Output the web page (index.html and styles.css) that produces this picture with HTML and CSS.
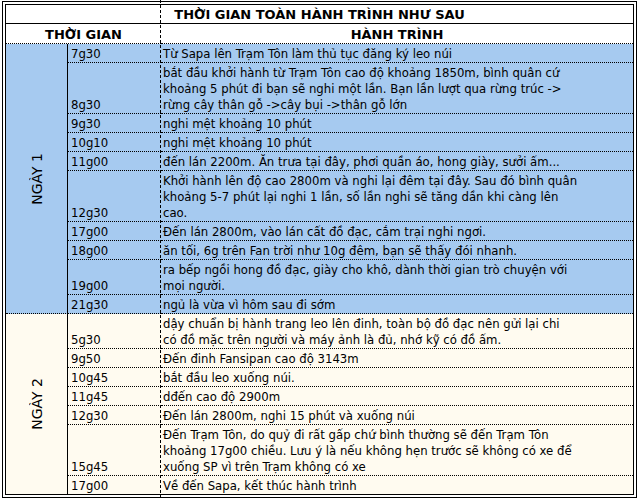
FILE: index.html
```html
<!DOCTYPE html>
<html lang="vi">
<head>
<meta charset="utf-8">
<title>Thời gian toàn hành trình</title>
<link rel="stylesheet" href="styles.css">
</head>
<body>
<div class="sheet">
  <div class="grid">
    <div class="title">THỜI GIAN TOÀN HÀNH TRÌNH NHƯ SAU</div>
    <div class="head head-time">THỜI GIAN</div>
    <div class="head head-route">HÀNH TRÌNH</div>

    <div class="day day1"><span>NGÀY 1</span></div>
    <div class="time d1">7g30</div><div class="desc d1">Từ Sapa lên Trạm Tôn làm thủ tục đăng ký leo núi</div>
    <div class="time d1">8g30</div><div class="desc d1">bắt đầu khởi hành từ Trạm Tôn cao độ khoảng 1850m, bình quân cứ<br>khoảng 5 phút đi bạn sẽ nghi một lần. Bạn lần lượt qua rừng trúc -&gt;<br>rừng cây thân gỗ -&gt;cây bụi -&gt;thân gỗ lớn</div>
    <div class="time d1">9g30</div><div class="desc d1">nghi mệt khoảng 10 phút</div>
    <div class="time d1">10g10</div><div class="desc d1">nghi mệt khoảng 10 phút</div>
    <div class="time d1">11g00</div><div class="desc d1">đến lán 2200m. Ăn trưa tại đây, phơi quần áo, hong giày, sưởi ấm...</div>
    <div class="time d1">12g30</div><div class="desc d1">Khởi hành lên độ cao 2800m và nghi lại đêm tại đây. Sau đó bình quân<br>khoảng 5-7 phút lại nghi 1 lần, số lần nghi sẽ tăng dần khi càng lên<br>cao.</div>
    <div class="time d1">17g00</div><div class="desc d1">Đến lán 2800m, vào lán cất đồ đạc, cắm trại nghi ngơi.</div>
    <div class="time d1">18g00</div><div class="desc d1">ăn tối, 6g trên Fan trời như 10g đêm, bạn sẽ thấy đói nhanh.</div>
    <div class="time d1">19g00</div><div class="desc d1">ra bếp ngồi hong đồ đạc, giày cho khô, dành thời gian trò chuyện với<br>mọi người.</div>
    <div class="time d1">21g30</div><div class="desc d1">ngủ là vừa vì hôm sau đi sớm</div>

    <div class="day day2"><span>NGÀY 2</span></div>
    <div class="time d2">5g30</div><div class="desc d2">dậy chuẩn bị hành trang leo lên đinh, toàn bộ đồ đạc nên gửi lại chi<br>có đồ mặc trên người và máy ảnh là đủ, nhớ kỹ có đồ ấm.</div>
    <div class="time d2">9g50</div><div class="desc d2">Đến đinh Fansipan cao độ 3143m</div>
    <div class="time d2">10g45</div><div class="desc d2">bắt đầu leo xuống núi.</div>
    <div class="time d2">11g45</div><div class="desc d2">dđến cao độ 2900m</div>
    <div class="time d2">12g30</div><div class="desc d2">Đến lán 2800m, nghi 15 phút và xuống núi</div>
    <div class="time d2">15g45</div><div class="desc d2">Đến Trạm Tôn, do quỷ đi rất gấp chứ bình thường sẽ đến Trạm Tôn<br>khoảng 17g00 chiều. Lưu ý là nếu không hẹn trước sẽ không có xe để<br>xuống SP vì trên Trạm không có xe</div>
    <div class="time d2 last">17g00</div><div class="desc d2 last">Về đến Sapa, kết thúc hành trình</div>
  </div>
  <div class="pagebreak"></div>
</div>
</body>
</html>
```

FILE: styles.css
```css
html, body {
  margin: 0;
  padding: 0;
  background: #ffffff;
}

body {
  font-family: "DejaVu Sans Condensed", "DejaVu Sans", sans-serif;
  font-stretch: condensed;
  font-size: 13px;
  color: #000000;
}

.sheet {
  position: relative;
  width: 638px;
  height: 499px;
  overflow: hidden;
}

.grid {
  margin: 1px 0 0 2px;
  width: 627px;
  border: 4px double #000000;
  display: grid;
  grid-template-columns: 62px 93px 472px;
}

.title {
  grid-column: 1 / -1;
  text-align: center;
  font-family: "DejaVu Sans", sans-serif;
  font-stretch: normal;
  font-weight: bold;
  line-height: 16px;
  padding-top: 2px;
  border-bottom: 1px solid #000000;
}

.head {
  font-family: "DejaVu Sans", sans-serif;
  font-stretch: normal;
  font-weight: bold;
  text-align: center;
  line-height: 16px;
  padding-top: 3px;
  border-bottom: 1px dotted #000000;
}

.head-time {
  grid-column: 1 / 3;
}

.day {
  border-right: 1px solid #000000;
  border-bottom: 1px dotted #000000;
  display: flex;
  align-items: center;
  justify-content: center;
}

.day span {
  writing-mode: vertical-rl;
  transform: rotate(180deg);
  font-size: 14px;
  font-stretch: normal;
  font-family: "DejaVu Sans", sans-serif;
}

.day1 {
  grid-row: span 10;
  background: #a6caf0;
}

.day2 {
  grid-row: span 7;
  background: #fffbf0;
  border-bottom: none;
}

.time,
.desc {
  display: flex;
  align-items: flex-end;
  line-height: 16px;
  padding-top: 2px;
  border-bottom: 1px dotted #000000;
  white-space: nowrap;
}

.time {
  padding-left: 3px;
}

.desc {
  padding-left: 2px;
}

.d1 {
  background: #a6caf0;
}

.d2 {
  background: #fffbf0;
}

.last {
  border-bottom: none;
}

.pagebreak {
  position: absolute;
  left: 160px;
  top: 0;
  width: 1px;
  height: 499px;
  background: repeating-linear-gradient(to bottom, #000000 0 3px, transparent 3px 5px);
}
```
